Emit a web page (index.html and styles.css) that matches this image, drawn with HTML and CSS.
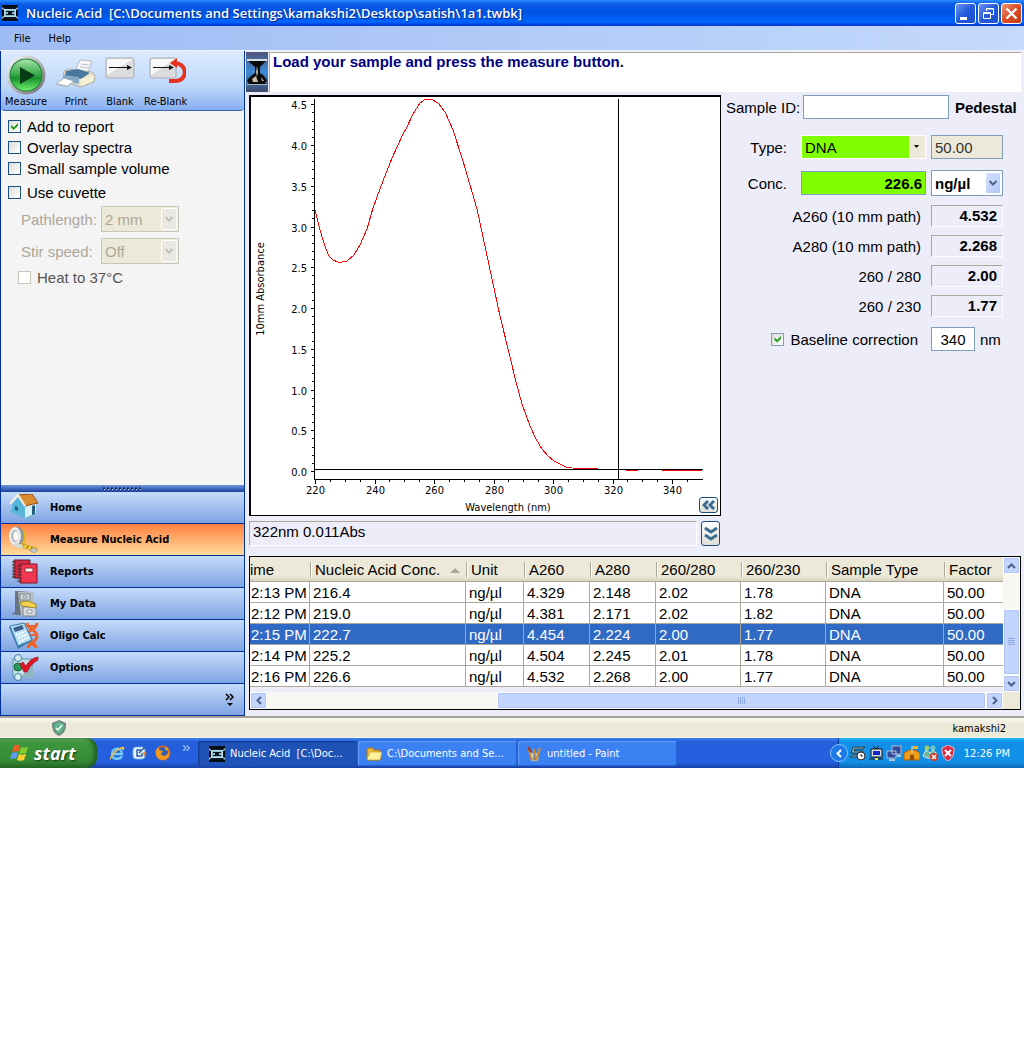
FILE: index.html
```html
<!DOCTYPE html>
<html lang="en">
<head>
    <meta charset="UTF-8">
    <meta name="viewport" content="width=device-width, initial-scale=1.0">
    <title>Nucleic Acid</title>
    <link rel="stylesheet" href="styles.css">
</head>
<body>
    <!-- shared icons -->
    <svg class="sprites" aria-hidden="true">
        <symbol id="app" viewBox="0 0 16 16">
            <path fill="#050a0e" d="M0 0h16v16H0z"/>
            <path fill="#b8dcec" d="M0 2h16v2l-2 1v6l2 1v2H0v-2l2-1V5L0 4z"/>
            <path fill="#07151d" d="M0 2h16l-2 2H2zM0 14h16l-2-2H2z"/>
            <path fill="#8ebdd2" d="M3 5h10v6H3z"/>
            <path fill="#07151d" d="M4 6h8v1h-2v2h2v1H4V9h2V7H4z"/>
        </symbol>
        <symbol id="down" viewBox="0 0 9 6"><path d="M1 1l3.500 3.500L8 1" fill="none" stroke="currentColor" stroke-width="2"/></symbol>
        <symbol id="up" viewBox="0 0 9 6"><path d="M1 5l3.500-3.500L8 5" fill="none" stroke="currentColor" stroke-width="2"/></symbol>
        <symbol id="left" viewBox="0 0 6 9"><path d="M5 1L1.500 4.500 5 8" fill="none" stroke="currentColor" stroke-width="2"/></symbol>
        <symbol id="right" viewBox="0 0 6 9"><path d="M1 1l3.500 3.500L1 8" fill="none" stroke="currentColor" stroke-width="2"/></symbol>
    </svg>

    <header class="titlebar">
        <svg class="app-icon" width="16" height="16"><use href="#app"/></svg>
        <h1 class="title">Nucleic Acid&nbsp; [C:\Documents and Settings\kamakshi2\Desktop\satish\1a1.twbk]</h1>
        <button class="win-button" aria-label="Minimize"><svg width="19" height="19"><path fill="#fff" d="M4 13h7v3H4z"/></svg></button>
        <button class="win-button" aria-label="Restore"><svg width="19" height="19" fill="none" stroke="#fff"><path d="M7.500 7V4.500h7v6H12M7 5h8M4.500 8.500h7v6h-7zM4 9.500h8"/></svg></button>
        <button class="win-button close" aria-label="Close"><svg width="19" height="19"><path stroke="#fff" stroke-width="2.400" d="M4.500 4.500l10 10M14.500 4.500l-10 10"/></svg></button>
    </header>

    <nav class="menubar">
        <button class="menu">File</button>
        <button class="menu">Help</button>
    </nav>

    <div class="workspace">
        <aside class="sidebar">
            <div class="toolbar">
                <button class="tool">
                    <svg width="40" height="40" viewBox="0 0 40 40">
                        <defs>
                            <linearGradient id="ring" x1="0" y1="0" x2="1" y2="1"><stop offset="0" stop-color="#fff"/><stop offset=".5" stop-color="#b5b5b5"/><stop offset="1" stop-color="#666"/></linearGradient>
                            <linearGradient id="green" x1="0" y1="0" x2="0" y2="1"><stop offset="0" stop-color="#a5e3a5"/><stop offset=".5" stop-color="#33a648"/><stop offset=".6" stop-color="#12912b"/><stop offset="1" stop-color="#75ee6e"/></linearGradient>
                        </defs>
                        <circle cx="20" cy="20" r="19.500" fill="url(#ring)"/>
                        <circle cx="20" cy="20" r="16.500" fill="#178336"/>
                        <circle cx="20" cy="20" r="15.500" fill="url(#green)"/>
                        <path d="M14 12v17l15-8.500z" fill="#063d13"/>
                    </svg>
                    <span>Measure</span>
                </button>
                <button class="tool">
                    <svg width="40" height="40" viewBox="0 0 40 40">
                        <path d="M24 5l12 1-5 13-13-1z" fill="#f5f5f5" stroke="#a0a5ad" stroke-width=".7"/>
                        <path d="M25 9l8 1M24 12l8 1" stroke="#bcc2c9"/>
                        <path d="M8 16l5-2 23 3 3 4-1 6-13 5-18-6z" fill="#e8e5cd" stroke="#97968a" stroke-width=".7"/>
                        <path d="M10 16l12-2 12 4-9 6-16-3z" fill="#49769c"/>
                        <path d="M8 20l15 2v7L7 26z" fill="#83aac9"/>
                        <path d="M24 24l14-3-1 5-12 5z" fill="#f5f1d6"/>
                        <path d="M8 23l10 3-7 6-11-3z" fill="#fff" stroke="#8e969e" stroke-width=".7"/>
                        <path d="M2 29l9 2 6-4" stroke="#b4bac0" fill="none"/>
                    </svg>
                    <span>Print</span>
                </button>
                <button class="tool">
                    <svg width="30" height="40" viewBox="6 0 30 40">
                        <rect x="7" y="3" width="28" height="20" rx="2" fill="#dcdcdc" stroke="#a8acb2"/>
                        <path d="M8 4h26L8 20z" fill="#f9f9f9"/>
                        <path d="M10 12.500h20" stroke="#111"/><path d="M28 10l5 2.500-5 2.500z" fill="#111"/>
                    </svg>
                    <span>Blank</span>
                </button>
                <button class="tool">
                    <svg width="40" height="40" viewBox="0 0 40 40">
                        <rect x="4" y="3" width="26" height="20" rx="2" fill="#dcdcdc" stroke="#a8acb2"/>
                        <path d="M5 4h24L5 20z" fill="#f9f9f9"/>
                        <path d="M7 12.500h18" stroke="#111"/><path d="M23 10l5 2.500-5 2.500z" fill="#111"/>
                        <path d="M29 8c13 1 13 18 0 18h-6" fill="none" stroke="#e83220" stroke-width="4"/>
                        <path d="M31 3v10l-7-5z" fill="#e83220"/>
                    </svg>
                    <span>Re-Blank</span>
                </button>
            </div>

            <div class="options">
                <label class="check"><input type="checkbox" checked> Add to report</label>
                <label class="check"><input type="checkbox"> Overlay spectra</label>
                <label class="check"><input type="checkbox"> Small sample volume</label>
                <label class="check cuvette"><input type="checkbox"> Use cuvette</label>
                <div class="cuvette-row">
                    <label for="pathlength">Pathlength:</label>
                    <span class="combo"><select id="pathlength" disabled><option>2 mm</option></select><svg class="arrow" width="9" height="6"><use href="#down"/></svg></span>
                </div>
                <div class="cuvette-row">
                    <label for="stir">Stir speed:</label>
                    <span class="combo"><select id="stir" disabled><option>Off</option></select><svg class="arrow" width="9" height="6"><use href="#down"/></svg></span>
                </div>
                <label class="check heat"><input type="checkbox" disabled> Heat to 37°C</label>
            </div>

            <nav class="nav">
                <div class="splitter"><svg width="40" height="3"><path d="M0 1.500h40" stroke="#10245e" stroke-width="2" stroke-dasharray="2 2"/><path d="M1 2.500h39" stroke="#c8dcff" stroke-dasharray="1 3"/></svg></div>
                <button class="nav-item">
                    <svg width="32" height="28" viewBox="0 0 32 28">
                        <path d="M1 17l9-4 20 4-10 9z" fill="#6db4cf"/>
                        <path d="M4 10l6-7 7 8v13L4 18z" fill="#5ab5da"/>
                        <path d="M17 11l11-2v10l-11 5z" fill="#d8eef6"/>
                        <path d="M10 1l14-1 6 9-13 3z" fill="#dc8c32" stroke="#8f4e13"/>
                        <path d="M2 10l8-9 7 11" fill="none" stroke="#f8f0da" stroke-width="2"/>
                        <path d="M24 12l3-1v9l-3 1zM7 12l3 1v4l-3-1z" fill="#215d80"/>
                    </svg>
                    Home
                </button>
                <button class="nav-item active">
                    <svg width="32" height="28" viewBox="0 0 32 28">
                        <path d="M12 4l6 1v12l-8 2z" fill="#e5b71d"/>
                        <path d="M11 17l18 5-1 4-5-2-12-4z" fill="#f5cf2b" stroke="#ad8310" stroke-width=".6"/>
                        <path d="M16 19l-1 2m5-1l-1 2m5-1l-1 3" stroke="#765b13"/>
                        <path d="M24 22l6 2-3 3-5-2z" fill="#c4c8ca" stroke="#888" stroke-width=".5"/>
                        <ellipse cx="9" cy="10" rx="7" ry="9.500" fill="#8f9598"/>
                        <ellipse cx="7" cy="10" rx="6" ry="9" fill="#f0f1f2"/>
                        <ellipse cx="7" cy="10" rx="4" ry="6.500" fill="#b8bdc1"/>
                        <ellipse cx="8" cy="10" rx="2.500" ry="4.500" fill="#fff"/>
                        <path d="M3 18l7 4 7-1-7-4z" fill="#d7dadb"/>
                    </svg>
                    Measure Nucleic Acid
                </button>
                <button class="nav-item">
                    <svg width="32" height="28" viewBox="0 0 32 28">
                        <path d="M6 2h16v18H6z" fill="#d52a43" stroke="#69202c"/>
                        <path d="M12 6h17v19H12z" fill="#f13850" stroke="#7d1427"/>
                        <path d="M17 10h8v4h-8z" fill="#f4eef1" stroke="#9a2638"/>
                        <path d="M4 4h4M4 7h4M4 10h4M4 13h4M4 16h4M4 19h4M9 8h5M9 11h5M9 14h5M9 17h5M9 20h5M9 23h5" stroke="#3c3438"/>
                    </svg>
                    Reports
                </button>
                <button class="nav-item">
                    <svg width="32" height="28" viewBox="0 0 32 28">
                        <path d="M3 24l4-2V1l17 1v23H10z" fill="#68747e"/>
                        <path d="M10 2h16v24H13z" fill="#b7bfc6"/>
                        <path d="M12 4h10v6H12zM15 17h13v9H15z" fill="#d6dbdf" stroke="#7c8790"/>
                        <path d="M12 12l8-1 8 3v4l-14-2z" fill="#f2d04b" stroke="#a28630"/>
                        <path d="M15 6h4v2h-4zM19 20h5v3h-5z" fill="#f8f8f8" stroke="#87909a"/>
                    </svg>
                    My Data
                </button>
                <button class="nav-item">
                    <svg width="32" height="28" viewBox="0 0 32 28">
                        <path d="M19 1c0 7 10 6 10 13s-9 6-9 12M29 1c0 7-10 6-10 13s9 6 9 12" fill="none" stroke="#ee632b" stroke-width="3"/>
                        <path d="M21 4h7M20 13h8M21 23h7" stroke="#ee632b" stroke-width="2"/>
                        <path d="M1 5l15-4 9 17-15 9z" fill="#367bac"/>
                        <path d="M2 4l14-3 8 17-14 6z" fill="#b6def4" stroke="#397ca7"/>
                        <path d="M5 6l9-3 2 4-9 3z" fill="#3c5f87"/>
                        <path d="M8 13l10-4M10 16l10-4M11 20l10-5" stroke="#fff" stroke-width="2" stroke-dasharray="2 1"/>
                    </svg>
                    Oligo Calc
                </button>
                <button class="nav-item">
                    <svg width="32" height="28" viewBox="0 0 32 28">
                        <path d="M5 5h19v18H5z" fill="#c3e0ea" stroke="#5a94a8"/>
                        <path d="M22 12h3v12H12z" fill="#8eb6c5"/>
                        <circle cx="10" cy="4" r="3.500" fill="#d6edf5" stroke="#407f99"/>
                        <circle cx="10" cy="13" r="4" fill="#2a995a" stroke="#156639"/>
                        <circle cx="10" cy="23" r="3.500" fill="#d6edf5" stroke="#407f99"/>
                        <path d="M12 10l3-2 3 4c3-5 6-8 12-9v3c-5 3-8 6-11 12h-3z" fill="#df1626" stroke="#a20b17" stroke-width=".6"/>
                    </svg>
                    Options
                </button>
                <div class="nav-more">
                    <button aria-label="Configure buttons"><svg width="10" height="14" viewBox="0 0 10 14"><path d="M1 1l3 3-3 3M5 1l3 3-3 3" fill="none" stroke="#000" stroke-width="1.500"/><path d="M2 10h6l-3 3z"/></svg></button>
                </div>
            </nav>
        </aside>

        <main class="content">
            <div class="message">
                <svg width="23" height="40" viewBox="0 0 23 40">
                    <defs><linearGradient id="lens" x1="0" y1="0" x2="0" y2="1"><stop offset="0" stop-color="#52547a"/><stop offset=".5" stop-color="#3a8bd8"/><stop offset="1" stop-color="#404867"/></linearGradient></defs>
                    <path d="M0 0h22v40H0z" fill="url(#lens)"/>
                    <path d="M1 7h20v2H1z" fill="#d9dde4"/>
                    <path d="M2 9h18l-6 6v6l3 2 4 5-2 4H3l-2-4 5-5 3-2v-6z" fill="#0b0b0c"/>
                    <path d="M11 14l1 6-1 5-1-5zM6 27l4-3 2 6H7zM15 25l3 4h-2z" fill="#c6c0b2"/>
                    <path d="M1 32h20v1H1z" fill="#a9b0ba"/>
                </svg>
                <p class="message-text">Load your sample and press the measure button.</p>
            </div>

            <div class="upper">
                <section class="plot-column">
                    <div class="plot">
                        <svg id="chart" viewBox="251 97 469 418">
                            <g id="axes" stroke="#000" fill="none" shape-rendering="crispEdges">
                                <path d="M314.500 99v380.500H703M315 469.500h388M618.500 99v380"/>
                            </g>
                            <path class="spectrum" d="M315 210L317 218L320 230L323 240L326 249L329 256L333 260L338 262H342L347 261L354 255L360 245L367 229L373 208L377 197L383 181L392 158L403 134L407 127L413 114L420 103L425 99.500H432L438 103L445 112L453 130L463 161L470 185L477 209L483 237L492 279L500 316L510 357L516 382L522 404L530 426L536 439L542 449L548 456L554 461L560 464L566 467L572 468L598 468.500M626 470.500h12M662 470.500h40"/>
                            <g id="labels"></g>
                            <text x="508" y="511" text-anchor="middle">Wavelength (nm)</text>
                            <text transform="translate(264 289) rotate(-90)" text-anchor="middle">10mm Absorbance</text>
                        </svg>
                        <button class="blue-button plot-collapse" aria-label="Collapse panel"><svg width="14" height="10" viewBox="0 0 14 10"><path d="M6 1L2 5l4 4M12 1L8 5l4 4" fill="none" stroke="#3c6e90" stroke-width="3"/></svg></button>
                    </div>
                    <div class="readout">
                        <output class="sunken">322nm 0.011Abs</output>
                        <button class="blue-button tall" aria-label="Expand results"><svg width="14" height="16" viewBox="0 0 14 16"><path d="M1 2l6 4 6-4M1 9l6 4 6-4" fill="none" stroke="#3c6e90" stroke-width="3"/></svg></button>
                    </div>
                </section>

                <section class="results">
                    <div class="row sample">
                        <label for="sample">Sample ID:</label>
                        <input id="sample" type="text">
                        <strong>Pedestal</strong>
                    </div>
                    <div class="row field-row">
                        <label for="type">Type:</label>
                        <span class="combo type"><select id="type"><option>DNA</option></select><svg class="arrow" width="5" height="3"><path d="M0 0h5L2.500 3z"/></svg></span>
                        <input class="box factor" type="text" value="50.00" aria-label="Factor" readonly>
                    </div>
                    <div class="row field-row">
                        <label for="conc">Conc.</label>
                        <input id="conc" class="conc" type="text" value="226.6" readonly>
                        <span class="combo unit"><select aria-label="Unit"><option>ng/µl</option></select><svg class="arrow" width="9" height="6"><use href="#down"/></svg></span>
                    </div>
                    <div class="row value-row"><span>A260 (10 mm path)</span><output class="box">4.532</output></div>
                    <div class="row value-row"><span>A280 (10 mm path)</span><output class="box">2.268</output></div>
                    <div class="row value-row"><span>260 / 280</span><output class="box">2.00</output></div>
                    <div class="row value-row"><span>260 / 230</span><output class="box">1.77</output></div>
                    <div class="row baseline">
                        <label class="check"><input type="checkbox" checked> Baseline correction</label>
                        <span class="wavelength"><input id="nm" type="text" value="340"><label for="nm">nm</label></span>
                    </div>
                </section>
            </div>

            <div class="grid-frame">
                <div class="grid-body">
                    <table>
                        <colgroup><col class="c60"><col class="c156"><col class="c58"><col class="c66"><col class="c66"><col class="c85"><col class="c85"><col class="c118"><col></colgroup>
                        <thead>
                            <tr><th>ime</th><th>Nucleic Acid Conc.<svg class="sort" width="10" height="5"><path d="M0 5h10L5 0z" fill="#aca899"/></svg></th><th>Unit</th><th>A260</th><th>A280</th><th>260/280</th><th>260/230</th><th>Sample Type</th><th>Factor</th></tr>
                        </thead>
                        <tbody>
                            <tr><td>2:13 PM</td><td>216.4</td><td>ng/µl</td><td>4.329</td><td>2.148</td><td>2.02</td><td>1.78</td><td>DNA</td><td>50.00</td></tr>
                            <tr><td>2:12 PM</td><td>219.0</td><td>ng/µl</td><td>4.381</td><td>2.171</td><td>2.02</td><td>1.82</td><td>DNA</td><td>50.00</td></tr>
                            <tr class="selected"><td>2:15 PM</td><td>222.7</td><td>ng/µl</td><td>4.454</td><td>2.224</td><td>2.00</td><td>1.77</td><td>DNA</td><td>50.00</td></tr>
                            <tr><td>2:14 PM</td><td>225.2</td><td>ng/µl</td><td>4.504</td><td>2.245</td><td>2.01</td><td>1.78</td><td>DNA</td><td>50.00</td></tr>
                            <tr><td>2:16 PM</td><td>226.6</td><td>ng/µl</td><td>4.532</td><td>2.268</td><td>2.00</td><td>1.77</td><td>DNA</td><td>50.00</td></tr>
                        </tbody>
                    </table>
                </div>
                <div class="scroll vertical">
                    <button aria-label="Scroll up"><svg width="9" height="6"><use href="#up"/></svg></button>
                    <div class="track"><div class="thumb"><svg width="7" height="8"><path d="M0 .5h7M0 2.500h7M0 4.500h7M0 6.500h7" stroke="#8ba7e4"/></svg></div></div>
                    <button aria-label="Scroll down"><svg width="9" height="6"><use href="#down"/></svg></button>
                </div>
                <div class="scroll horizontal">
                    <button aria-label="Scroll left"><svg width="6" height="9"><use href="#left"/></svg></button>
                    <div class="track"><div class="thumb"><svg width="8" height="7"><path d="M.5 0v7M2.500 0v7M4.500 0v7M6.500 0v7" stroke="#8ba7e4"/></svg></div></div>
                    <button aria-label="Scroll right"><svg width="6" height="9"><use href="#right"/></svg></button>
                </div>
            </div>
        </main>
    </div>

    <footer class="statusbar">
        <svg width="16" height="16" viewBox="0 0 16 16"><path d="M8 0l7 3c0 6-1 10-7 13C2 13 1 9 1 3z" fill="#70877e"/><path d="M8 2l5 2c0 5-1 7-5 10C4 11 3 9 3 4z" fill="#5eb78d"/><path d="M5 8l2 2 4-5" fill="none" stroke="#fff" stroke-width="1.500"/></svg>
        <span>kamakshi2</span>
    </footer>

    <div class="taskbar">
        <button class="start">
            <svg width="20" height="20" viewBox="0 0 20 20">
                <path d="M4 3c2-2 4-1 6 0L8 9C6 8 4 8 2 9z" fill="#f25c22"/>
                <path d="M11 4c2 1 4 1 7 0l-2 6c-2 1-5 1-7 0z" fill="#84cc2b"/>
                <path d="M2 10c2-1 4-1 6 0l-2 6c-2-1-4-1-6 0z" fill="#5b9cf5"/>
                <path d="M9 11c2 1 4 1 7 0l-2 6c-2 1-5 1-7 0z" fill="#fbd02c"/>
            </svg>
            start
        </button>
        <div class="quick">
            <button aria-label="Internet Explorer"><svg width="16" height="16" viewBox="0 0 16 16"><path d="M13 11c-2 4-10 4-10-2 0-7 10-7 10 0H5" fill="none" stroke="#74c8fa" stroke-width="2.500"/><path d="M1 15C-1 12 10 0 15 2c1 1 0 3-1 4 0-5-7-1-13 9z" fill="#f4c13c"/></svg></button>
            <button aria-label="Show desktop"><svg width="16" height="16" viewBox="0 0 16 16"><rect x="1" y="2" width="12" height="12" rx="3" fill="#e9f3fc" stroke="#69aee3"/><path d="M9 5H5v6h5V8M7 8l6-6" fill="none" stroke="#315e9b" stroke-width="1.500"/><path d="M11 7l4 1-3 3z" fill="#e87b24"/></svg></button>
            <button aria-label="Firefox"><svg width="16" height="16" viewBox="0 0 16 16"><circle cx="8" cy="8" r="7.500" fill="#e56b16"/><circle cx="8" cy="7" r="5" fill="#325eac"/><path d="M1 5l3-3v3l4 1-2 3c2 3 6 2 8-2 1 5-3 8-7 8-5-1-7-5-6-10z" fill="#f09a24"/><path d="M9 2l4 2-1 2z" fill="#f6cf43"/></svg></button>
            <span class="more">»</span>
        </div>
        <button class="task active"><svg width="16" height="16"><use href="#app"/></svg><span>Nucleic Acid&nbsp; [C:\Doc...</span></button>
        <button class="task"><svg width="16" height="16" viewBox="0 0 16 16"><path d="M1 3l1-1h5l1 2h6v9l-1 1H2l-1-1z" fill="#e9b83e" stroke="#a47514"/><path d="M1 13l3-7h12l-2 8H2z" fill="#fff09a" stroke="#c69a29" stroke-width=".7"/></svg><span>C:\Documents and Se...</span></button>
        <button class="task"><svg width="16" height="16" viewBox="0 0 16 16"><path d="M4 7h9l-1 8H5z" fill="#d4e6ea" stroke="#7391a0"/><path d="M6 14L2 1M8 14V3M10 14l4-12" stroke="#d68a28" stroke-width="2"/><path d="M2 1l3 5" stroke="#9e3322" stroke-width="2"/><path d="M9 8v6" stroke="#3a67c4"/></svg><span>untitled - Paint</span></button>
        <div class="tray">
            <button class="tray-toggle" aria-label="Show hidden icons"><svg width="6" height="9"><use href="#left"/></svg></button>
            <svg width="16" height="16" viewBox="0 0 16 16"><path d="M3 2h12l-2 2H5l-1 2h9l-2 6H0l2-2h6l1-2H1z" fill="#81aab8" stroke="#142e3c" stroke-width=".8"/><circle cx="11" cy="11" r="4" fill="#fff" stroke="#222"/><path d="M11 9v2h2" stroke="#222" fill="none"/></svg>
            <svg width="16" height="16" viewBox="0 0 16 16"><path d="M5 1l3 3 3-3" stroke="#111" fill="none"/><path d="M3 4h11v8H3z" fill="#ddd" stroke="#111"/><path d="M5 6h7v4H5z" fill="#1024c8"/><path d="M8 12v3M1 14h14" stroke="#111"/><path d="M7 13h3v2H7z" fill="#ffe432"/></svg>
            <svg width="16" height="16" viewBox="0 0 16 16"><path d="M6 1h9v8H6zM1 6h9v7H1z" fill="#304a9c" stroke="#b4bfd7"/><path d="M3 15h6M11 11h4" stroke="#b8c4da" stroke-width="2"/></svg>
            <svg width="16" height="16" viewBox="0 0 16 16"><path d="M0 8l5-3h6l5 3v7H0z" fill="#f09b16" stroke="#a95e06"/><path d="M8 1v7" stroke="#e4eaf2"/><path d="M9 1h5v3H9z" fill="#ffb321"/><path d="M6 15v-4l2-2 2 2v4z" fill="#8d4d06"/></svg>
            <svg width="16" height="16" viewBox="0 0 16 16"><circle cx="5" cy="3" r="2.500" fill="#a2cb70"/><circle cx="11" cy="3" r="2.500" fill="#73c8bf"/><path d="M1 11l3-6 4 3 3-3 4 4-3 4H5z" fill="#6fb5a2" stroke="#d8eee0"/><circle cx="12" cy="12" r="4" fill="#de321d"/><path d="M10 10l4 4M14 10l-4 4" stroke="#fff" stroke-width="1.500"/></svg>
            <svg width="16" height="16" viewBox="0 0 16 16"><path d="M8 0l6 3c0 6-1 10-6 13C3 13 2 9 2 3z" fill="#df2940" stroke="#e8bcc5"/><path d="M5 5l6 6M11 5l-6 6" stroke="#fff" stroke-width="2"/></svg>
            <time>12:26 PM</time>
        </div>
    </div>

    <script>
        const NS = 'http://www.w3.org/2000/svg';
        const axes = document.getElementById('axes');
        const labels = document.getElementById('labels');

        // plot origin and pixels per unit
        const xPos = nm => Math.round(315 + (nm - 220) * 2.975) + 0.5;
        const yPos = abs => Math.round(471 - abs * 81.5) + 0.5;

        function addTick(d) {
            const tick = document.createElementNS(NS, 'path');
            tick.setAttribute('d', d);
            axes.appendChild(tick);
        }

        function addLabel(x, y, anchor, value) {
            const text = document.createElementNS(NS, 'text');
            text.setAttribute('x', x);
            text.setAttribute('y', y);
            text.setAttribute('text-anchor', anchor);
            text.textContent = value;
            labels.appendChild(text);
        }

        for (let i = 0; i <= 45; i++) {
            const major = i % 5 === 0;
            addTick(`M314 ${yPos(i / 10)}h${major ? -3 : -2}`);
            if (major) addLabel(307, yPos(i / 10) + 4, 'end', (i / 10).toFixed(1));
        }

        for (let nm = 220; nm < 350; nm += 5) {
            const major = nm % 20 === 0;
            addTick(`M${xPos(nm)} 479v${major ? 5 : 3}`);
            if (major) addLabel(xPos(nm), 494, 'middle', nm);
        }
    </script>
</body>
</html>
```

FILE: styles.css
```css
* {
    box-sizing: border-box;
}

body {
    margin: 0;
    background: #fff;
    color: #000;
    font-family: "Liberation Sans", Arial, sans-serif;
    font-size: 15px;
}

button,
input,
select,
output {
    font: inherit;
    color: inherit;
}

button {
    margin: 0;
    padding: 0;
    border: 0;
    background: none;
}

svg {
    display: block;
    flex-shrink: 0;
}

.sprites {
    position: absolute;
    width: 0;
    height: 0;
}

/* title and menu */
.titlebar {
    display: flex;
    align-items: center;
    gap: 2px;
    height: 26px;
    padding: 0 2px;
    background: linear-gradient(#2b8cff 0, #0a5be8 4px, #0053e1 12px, #0066ff 22px, #003dd7 25px);
}

.app-icon {
    margin-right: 6px;
}

.title {
    flex: 1;
    margin: 0;
    color: #fff;
    font: 600 13px "Open Sans", "Noto Sans", sans-serif;
    text-shadow: 1px 1px 1px #06288c;
    white-space: nowrap;
}

.win-button {
    width: 21px;
    height: 21px;
    border: 1px solid #fff;
    border-radius: 3px;
    background: linear-gradient(135deg, #6d94f3, #225ad9 50%, #1c4fd0);
}

.close {
    background: linear-gradient(135deg, #f0967a, #dd4b24 50%, #c23b14);
}

.menubar {
    display: flex;
    gap: 18px;
    height: 25px;
    padding: 0 14px;
    border-bottom: 1px solid #eef4ff;
    background: linear-gradient(90deg, #9ebcf4, #c4d9fb);
}

.menu,
.tool,
.statusbar,
.task,
.tray,
#chart text {
    font-family: "DejaVu Sans Condensed", "DejaVu Sans", sans-serif;
    font-size: 11px;
}

.workspace {
    display: flex;
    background: #ededf9;
}

/* sidebar */
.sidebar {
    display: flex;
    flex-direction: column;
    flex: 0 0 245px;
    border: solid #00309c;
    border-width: 0 1px;
    background: #f4f4f4;
}

.toolbar {
    display: flex;
    gap: 9px;
    height: 60px;
    padding: 4px;
    border-bottom: 1px solid #3a62a5;
    border-radius: 0 0 4px 4px;
    background: linear-gradient(#dceafe, #bfd8fb 60%, #86aff0);
}

.tool {
    display: flex;
    flex-direction: column;
    align-items: center;
    line-height: 13px;
}

.options {
    display: flex;
    flex: 1;
    flex-direction: column;
    padding: 5px 7px;
}

.check {
    display: flex;
    align-items: center;
    gap: 6px;
    line-height: 21px;
    white-space: nowrap;
}

.check input {
    display: grid;
    place-items: center;
    width: 13px;
    height: 13px;
    margin: 0;
    appearance: none;
    border: 1px solid #1c5180;
    background: linear-gradient(135deg, #dcdcd7, #fff);
}

.check input:checked::before {
    content: "";
    width: 7px;
    height: 7px;
    background: #21a121;
    clip-path: polygon(0 30%, 40% 60%, 100% 0, 100% 40%, 40% 100%, 0 65%);
}

.check input:disabled {
    border-color: #cac8bb;
    background: #fff;
}

.cuvette {
    margin-top: 3px;
}

.cuvette-row {
    display: grid;
    grid-template-columns: 80px 78px;
    align-items: center;
    height: 32px;
    padding-left: 13px;
    color: #aca899;
}

.heat {
    padding-left: 10px;
    color: #555;
}

.combo {
    display: block;
    position: relative;
}

.combo select {
    display: block;
    width: 100%;
    height: 26px;
    padding: 0 3px;
    appearance: none;
    border: 1px solid #7f9db9;
    border-radius: 0;
    background: #fff;
    opacity: 1;
}

.combo select:disabled {
    border-color: #c9c7ba;
    background: #ece9d8;
    color: #aca899;
}

.arrow {
    position: absolute;
    top: 2px;
    right: 2px;
    width: 16px;
    height: 22px;
    padding: 7px 2px;
    border: 1px solid #fff;
    border-radius: 2px;
    background: #e9e8e2;
    color: #c2c0b4;
    pointer-events: none;
}

/* navigation pane */
.splitter {
    display: flex;
    justify-content: center;
    height: 7px;
    padding-top: 2px;
    background: linear-gradient(#6e95dc, #1a3f9c);
}

.nav-item,
.nav-more {
    display: flex;
    align-items: center;
    width: 100%;
    height: 32px;
    border-bottom: 1px solid #00309c;
    background: linear-gradient(#c6dcfa, #7ea3e2);
}

.nav-item {
    gap: 10px;
    padding-left: 7px;
    font: bold 11px "DejaVu Sans Condensed", "DejaVu Sans", sans-serif;
}

.nav-item.active {
    background: linear-gradient(#ff8040, #ffdc9c);
}

.nav-more {
    justify-content: flex-end;
    padding-right: 9px;
}

/* measurement area */
.content {
    display: flex;
    flex: 1;
    flex-direction: column;
    min-width: 0;
}

.message {
    display: flex;
    padding: 1px 3px 0 1px;
}

.message-text {
    flex: 1;
    margin: 0;
    padding-left: 3px;
    border: solid #aca899;
    border-width: 1px 0 0 1px;
    background: #fff;
    color: #000080;
    font-weight: bold;
    line-height: 18px;
}

.upper {
    display: flex;
    padding: 3px 0 0 4px;
}

.plot-column {
    flex: 1;
    min-width: 0;
}

.plot {
    position: relative;
    border: solid #000;
    border-width: 2px 1px 1px 2px;
    background: #fff;
}

#chart {
    width: 100%;
    height: auto;
}

.spectrum {
    fill: none;
    stroke: #f00;
    shape-rendering: crispEdges;
}

.blue-button {
    display: grid;
    place-items: center;
    width: 19px;
    height: 16px;
    border: 1px solid #1c4d79;
    border-radius: 3px;
    background: linear-gradient(#fff, #e0e0d8);
}

.plot-collapse {
    position: absolute;
    right: 2px;
    bottom: 2px;
}

.readout {
    display: flex;
    gap: 4px;
    padding: 5px 1px 0 0;
}

.sunken {
    flex: 1;
    height: 25px;
    padding-left: 3px;
    border: 1px solid;
    border-color: #aca899 #fff #fff #aca899;
    line-height: 20px;
}

.tall {
    height: 25px;
}

.results {
    flex: 0 0 303px;
    padding-right: 21px;
}

.results input {
    min-width: 0;
    border: 1px solid #7f9db9;
    border-radius: 0;
}

.row {
    display: grid;
    align-items: center;
    white-space: nowrap;
}

.sample {
    grid-template-columns: 77px 146px auto;
    height: 24px;
    margin: 0 -21px 10px 5px;
}

.sample input {
    height: 24px;
}

.sample strong {
    padding-left: 6px;
}

.field-row {
    grid-template-columns: 66px 125px 72px;
    gap: 5px;
    justify-content: end;
    height: 36px;
}

.field-row label {
    padding-right: 9px;
    text-align: right;
}

.results .field-row input {
    width: 100%;
    height: 24px;
    padding: 0 3px;
}

.results .factor {
    background: #ece9d8;
    color: #333;
}

.results .conc {
    padding: 0 2px;
    background: #80ff00;
    font-weight: bold;
    text-align: right;
}

.type select {
    height: 24px;
    border: 1px solid #fff;
    background: #80ff00;
}

.type .arrow {
    top: 1px;
    right: 1px;
    padding: 9px 5px;
    border: 0;
    border-radius: 0;
    background: #ece9d8;
    color: #000;
}

.unit select {
    font-weight: bold;
}

.unit .arrow {
    background: linear-gradient(135deg, #d7e3ff, #aec6f5);
    color: #4d6185;
}

.value-row {
    grid-template-columns: auto 72px;
    gap: 10px;
    justify-content: end;
    height: 30px;
}

.value-row .box {
    height: 22px;
    padding-right: 5px;
    border: 1px solid;
    border-color: #aca899 #fff #fff #aca899;
    font-weight: bold;
    line-height: 19px;
    text-align: right;
}

.baseline {
    grid-template-columns: auto 72px;
    gap: 13px;
    justify-content: end;
    height: 36px;
}

.wavelength {
    display: flex;
    align-items: center;
    gap: 5px;
}

.wavelength input {
    width: 44px;
    height: 24px;
    padding: 0;
    text-align: center;
}

/* results table */
.grid-frame {
    display: grid;
    grid-template-columns: 1fr 17px;
    grid-template-rows: auto 17px;
    margin: 10px 3px 6px 4px;
    border: 1px solid #000;
    background: #ece9d8;
}

.grid-body {
    min-width: 0;
    padding-bottom: 5px;
    overflow: hidden;
    background: #ededf9;
}

table {
    width: 100%;
    table-layout: fixed;
    border-collapse: separate;
    border-spacing: 0;
}

.c58 { width: 58px; }
.c60 { width: 60px; }
.c66 { width: 66px; }
.c85 { width: 85px; }
.c118 { width: 118px; }
.c156 { width: 156px; }

th,
td {
    padding: 0 3px;
    text-align: left;
    white-space: nowrap;
}

th {
    height: 25px;
    padding: 0 5px;
    border-bottom: 1px solid #aca899;
    background: linear-gradient(90deg, #aca899 1px, #fff 1px, #fff 2px, transparent 2px) 0 5px / 100% 15px no-repeat, linear-gradient(#ece9d8 80%, #d6d2c2);
    font-weight: normal;
}

th:first-child {
    padding: 0;
    background: linear-gradient(#ece9d8 80%, #d6d2c2);
}

.sort {
    display: inline-block;
    margin-left: 10px;
    vertical-align: 2px;
}

td {
    height: 21px;
    border: solid #aca899;
    border-width: 0 1px 1px 0;
    background: #fff;
}

td:first-child {
    padding: 0 1px;
}

td:last-child {
    border-right: 0;
}

.selected td {
    background: #316ac5;
    color: #fff;
}

.scroll {
    display: flex;
    background: #f8f7f2;
}

.vertical {
    flex-direction: column;
}

.scroll button,
.thumb {
    display: grid;
    flex-shrink: 0;
    place-items: center;
    width: 17px;
    height: 17px;
    border: 1px solid #fff;
    border-radius: 2px;
    background: #c3d5fd;
    box-shadow: inset 0 0 0 1px #b0c5f3;
    color: #4d6185;
}

.track {
    display: flex;
    flex: 1;
    justify-content: flex-end;
}

.vertical .track {
    flex-direction: column;
}

.vertical .thumb {
    height: 65%;
}

.horizontal .thumb {
    width: 68%;
}

/* status bar */
.statusbar {
    display: flex;
    align-items: center;
    justify-content: space-between;
    height: 22px;
    padding: 0 18px 0 51px;
    border-top: 2px solid #a5a294;
    background: linear-gradient(#fbfaf5, #ece9d8 6px, #ece9d8 18px, #f8f6ec);
}

/* task bar */
.taskbar {
    display: flex;
    height: 30px;
    background: linear-gradient(#3a80ec, #245edb 4px, #2560df 24px, #1941a5);
    color: #fff;
}

.start {
    display: flex;
    align-items: center;
    gap: 4px;
    width: 97px;
    padding-left: 10px;
    border-radius: 0 10px 10px 0;
    background: linear-gradient(#6cb56c, #3c963c 5px, #388c38 22px, #256b25);
    box-shadow: inset -3px 0 4px #1f5c1f;
    color: #fff;
    font: italic bold 18px "Open Sans", "Noto Sans", sans-serif;
    text-shadow: 1px 1px 2px #143a14;
}

.quick {
    display: flex;
    align-items: center;
    gap: 7px;
    width: 101px;
    padding-left: 12px;
}

.quick .more {
    align-self: flex-start;
    padding-left: 4px;
    color: #a9ccff;
}

.task {
    display: flex;
    align-items: center;
    gap: 5px;
    flex: 0 1 159px;
    min-width: 0;
    height: 25px;
    margin: 3px 1px 0 0;
    padding: 0 8px;
    border-radius: 2px;
    background: #3c81f3;
    box-shadow: inset 1px 1px 1px #669df8, inset -1px -1px 1px #2260d0;
    color: #fff;
    white-space: nowrap;
}

.task.active {
    padding-left: 11px;
    background: #1e52b7;
    box-shadow: inset 1px 1px 2px #103986;
}

.tray {
    display: flex;
    align-items: center;
    gap: 2px;
    margin-left: auto;
    padding-right: 14px;
    border-left: 1px solid #0b3a9a;
    background: linear-gradient(#19b9f6, #1290e8 4px, #1290e8 24px, #0e66b5);
}

.tray-toggle {
    display: grid;
    place-items: center;
    width: 18px;
    height: 18px;
    margin-left: -9px;
    border: 1px solid #83c6ff;
    border-radius: 50%;
    background: #1d78e8;
    color: #fff;
}

.tray time {
    padding-left: 6px;
}
```
